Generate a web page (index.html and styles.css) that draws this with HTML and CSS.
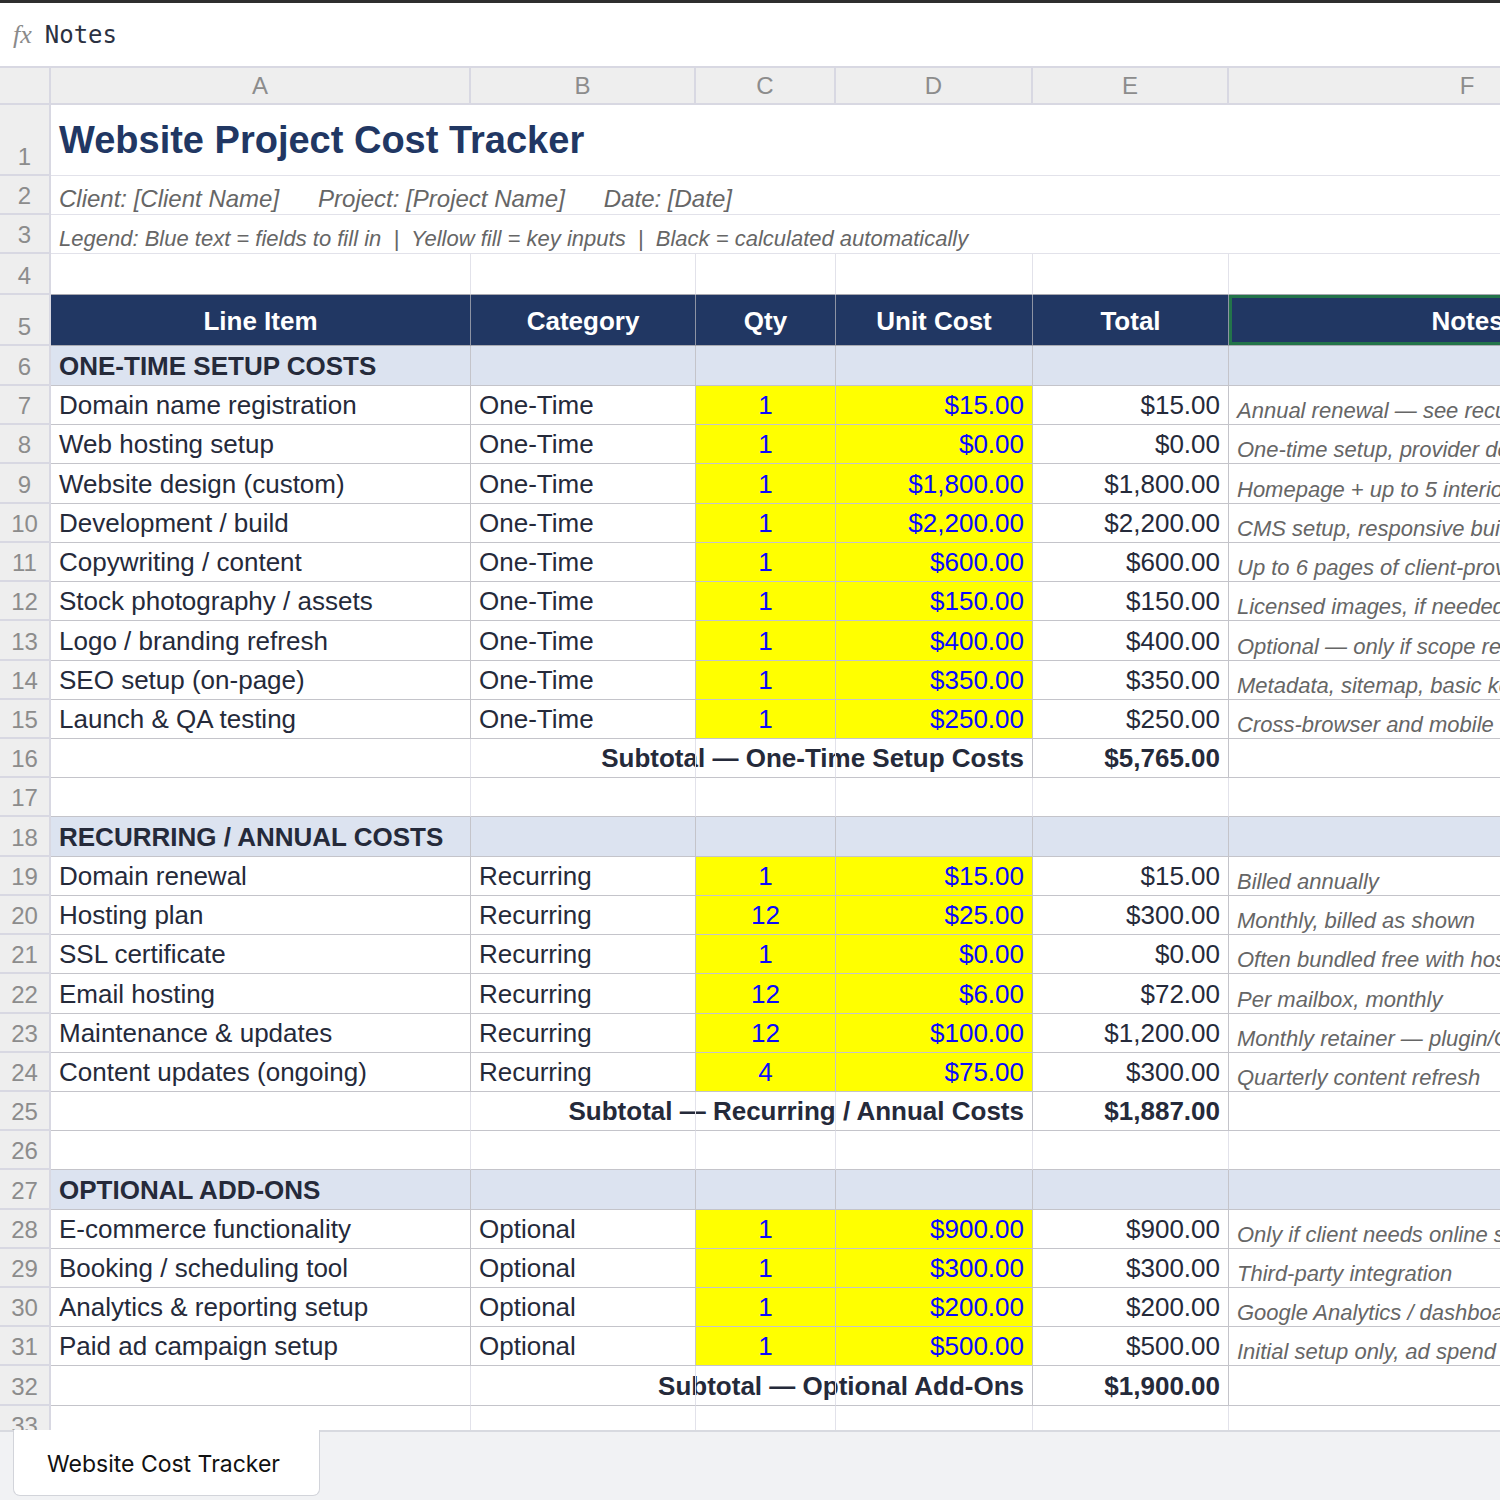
FILE: index.html
```html
<!DOCTYPE html>
<html>
<head>
    <title>Website Cost Tracker</title>
    <meta charset="UTF-8">
    <link rel="stylesheet" href="styles.css">
</head>
<body>
    <div class="app">
        <div class="top-strip"></div>
        <div class="formula-bar">
            <span class="fx">fx</span>
            <span class="formula">Notes</span>
        </div>

        <div class="grid-wrap">
            <table class="sheet">
                <colgroup>
                    <col class="c-rn">
                    <col class="c-a">
                    <col class="c-b">
                    <col class="c-c">
                    <col class="c-d">
                    <col class="c-e">
                    <col class="c-f">
                </colgroup>
                <thead>
                    <tr class="col-heads">
                        <th class="corner"></th>
                        <th>A</th>
                        <th>B</th>
                        <th>C</th>
                        <th>D</th>
                        <th>E</th>
                        <th>F</th>
                    </tr>
                </thead>
                <tbody>
                    <tr class="r-title">
                        <th class="rn">1</th>
                        <td colspan="6" class="title">Website Project Cost Tracker</td>
                    </tr>
                    <tr class="r-info">
                        <th class="rn">2</th>
                        <td colspan="6" class="meta"><span>Client: [Client Name]</span><span>Project: [Project Name]</span><span>Date: [Date]</span></td>
                    </tr>
                    <tr class="r-info">
                        <th class="rn">3</th>
                        <td colspan="6" class="legend">Legend: Blue text = fields to fill in  |  Yellow fill = key inputs  |  Black = calculated automatically</td>
                    </tr>
                    <tr class="r-gap blank">
                        <th class="rn">4</th>
                        <td></td><td></td><td></td><td></td><td></td><td></td>
                    </tr>
                    <tr class="r-head">
                        <th class="rn">5</th>
                        <td class="hd">Line Item</td>
                        <td class="hd">Category</td>
                        <td class="hd">Qty</td>
                        <td class="hd">Unit Cost</td>
                        <td class="hd">Total</td>
                        <td class="hd selected">Notes</td>
                    </tr>

                    <tr class="r-section">
                        <th class="rn">6</th>
                        <td>ONE-TIME SETUP COSTS</td><td></td><td></td><td></td><td></td><td></td>
                    </tr>
                    <tr class="r-item">
                        <th class="rn">7</th>
                        <td>Domain name registration</td><td>One-Time</td>
                        <td class="input qty">1</td><td class="input money">$15.00</td>
                        <td class="money">$15.00</td><td class="note">Annual renewal — see recurring costs</td>
                    </tr>
                    <tr class="r-item">
                        <th class="rn">8</th>
                        <td>Web hosting setup</td><td>One-Time</td>
                        <td class="input qty">1</td><td class="input money">$0.00</td>
                        <td class="money">$0.00</td><td class="note">One-time setup, provider dependent</td>
                    </tr>
                    <tr class="r-item">
                        <th class="rn">9</th>
                        <td>Website design (custom)</td><td>One-Time</td>
                        <td class="input qty">1</td><td class="input money">$1,800.00</td>
                        <td class="money">$1,800.00</td><td class="note">Homepage + up to 5 interior pages</td>
                    </tr>
                    <tr class="r-item">
                        <th class="rn">10</th>
                        <td>Development / build</td><td>One-Time</td>
                        <td class="input qty">1</td><td class="input money">$2,200.00</td>
                        <td class="money">$2,200.00</td><td class="note">CMS setup, responsive build</td>
                    </tr>
                    <tr class="r-item">
                        <th class="rn">11</th>
                        <td>Copywriting / content</td><td>One-Time</td>
                        <td class="input qty">1</td><td class="input money">$600.00</td>
                        <td class="money">$600.00</td><td class="note">Up to 6 pages of client-provided copy</td>
                    </tr>
                    <tr class="r-item">
                        <th class="rn">12</th>
                        <td>Stock photography / assets</td><td>One-Time</td>
                        <td class="input qty">1</td><td class="input money">$150.00</td>
                        <td class="money">$150.00</td><td class="note">Licensed images, if needed</td>
                    </tr>
                    <tr class="r-item">
                        <th class="rn">13</th>
                        <td>Logo / branding refresh</td><td>One-Time</td>
                        <td class="input qty">1</td><td class="input money">$400.00</td>
                        <td class="money">$400.00</td><td class="note">Optional — only if scope requires</td>
                    </tr>
                    <tr class="r-item">
                        <th class="rn">14</th>
                        <td>SEO setup (on-page)</td><td>One-Time</td>
                        <td class="input qty">1</td><td class="input money">$350.00</td>
                        <td class="money">$350.00</td><td class="note">Metadata, sitemap, basic keywords</td>
                    </tr>
                    <tr class="r-item">
                        <th class="rn">15</th>
                        <td>Launch &amp; QA testing</td><td>One-Time</td>
                        <td class="input qty">1</td><td class="input money">$250.00</td>
                        <td class="money">$250.00</td><td class="note">Cross-browser and mobile testing</td>
                    </tr>
                    <tr class="r-item subtotal">
                        <th class="rn">16</th>
                        <td class="open"></td><td class="open"></td><td class="open"></td>
                        <td class="spill-cell"><div class="spill"><span>Subtotal — One-Time Setup Costs</span></div></td>
                        <td class="money">$5,765.00</td><td></td>
                    </tr>
                    <tr class="r-item blank">
                        <th class="rn">17</th>
                        <td></td><td></td><td></td><td></td><td></td><td></td>
                    </tr>

                    <tr class="r-item r-section">
                        <th class="rn">18</th>
                        <td>RECURRING / ANNUAL COSTS</td><td></td><td></td><td></td><td></td><td></td>
                    </tr>
                    <tr class="r-item">
                        <th class="rn">19</th>
                        <td>Domain renewal</td><td>Recurring</td>
                        <td class="input qty">1</td><td class="input money">$15.00</td>
                        <td class="money">$15.00</td><td class="note">Billed annually</td>
                    </tr>
                    <tr class="r-item">
                        <th class="rn">20</th>
                        <td>Hosting plan</td><td>Recurring</td>
                        <td class="input qty">12</td><td class="input money">$25.00</td>
                        <td class="money">$300.00</td><td class="note">Monthly, billed as shown</td>
                    </tr>
                    <tr class="r-item">
                        <th class="rn">21</th>
                        <td>SSL certificate</td><td>Recurring</td>
                        <td class="input qty">1</td><td class="input money">$0.00</td>
                        <td class="money">$0.00</td><td class="note">Often bundled free with hosting</td>
                    </tr>
                    <tr class="r-item">
                        <th class="rn">22</th>
                        <td>Email hosting</td><td>Recurring</td>
                        <td class="input qty">12</td><td class="input money">$6.00</td>
                        <td class="money">$72.00</td><td class="note">Per mailbox, monthly</td>
                    </tr>
                    <tr class="r-item">
                        <th class="rn">23</th>
                        <td>Maintenance &amp; updates</td><td>Recurring</td>
                        <td class="input qty">12</td><td class="input money">$100.00</td>
                        <td class="money">$1,200.00</td><td class="note">Monthly retainer — plugin/CMS updates</td>
                    </tr>
                    <tr class="r-item">
                        <th class="rn">24</th>
                        <td>Content updates (ongoing)</td><td>Recurring</td>
                        <td class="input qty">4</td><td class="input money">$75.00</td>
                        <td class="money">$300.00</td><td class="note">Quarterly content refresh</td>
                    </tr>
                    <tr class="r-item subtotal">
                        <th class="rn">25</th>
                        <td class="open"></td><td class="open"></td><td class="open"></td>
                        <td class="spill-cell"><div class="spill"><span>Subtotal — Recurring / Annual Costs</span></div></td>
                        <td class="money">$1,887.00</td><td></td>
                    </tr>
                    <tr class="r-item blank">
                        <th class="rn">26</th>
                        <td></td><td></td><td></td><td></td><td></td><td></td>
                    </tr>

                    <tr class="r-item r-section">
                        <th class="rn">27</th>
                        <td>OPTIONAL ADD-ONS</td><td></td><td></td><td></td><td></td><td></td>
                    </tr>
                    <tr class="r-item">
                        <th class="rn">28</th>
                        <td>E-commerce functionality</td><td>Optional</td>
                        <td class="input qty">1</td><td class="input money">$900.00</td>
                        <td class="money">$900.00</td><td class="note">Only if client needs online sales</td>
                    </tr>
                    <tr class="r-item">
                        <th class="rn">29</th>
                        <td>Booking / scheduling tool</td><td>Optional</td>
                        <td class="input qty">1</td><td class="input money">$300.00</td>
                        <td class="money">$300.00</td><td class="note">Third-party integration</td>
                    </tr>
                    <tr class="r-item">
                        <th class="rn">30</th>
                        <td>Analytics &amp; reporting setup</td><td>Optional</td>
                        <td class="input qty">1</td><td class="input money">$200.00</td>
                        <td class="money">$200.00</td><td class="note">Google Analytics / dashboard setup</td>
                    </tr>
                    <tr class="r-item">
                        <th class="rn">31</th>
                        <td>Paid ad campaign setup</td><td>Optional</td>
                        <td class="input qty">1</td><td class="input money">$500.00</td>
                        <td class="money">$500.00</td><td class="note">Initial setup only, ad spend not included</td>
                    </tr>
                    <tr class="r-item subtotal">
                        <th class="rn">32</th>
                        <td class="open"></td><td class="open"></td><td class="open"></td>
                        <td class="spill-cell"><div class="spill"><span>Subtotal — Optional Add-Ons</span></div></td>
                        <td class="money">$1,900.00</td><td></td>
                    </tr>
                    <tr class="r-item blank">
                        <th class="rn">33</th>
                        <td></td><td></td><td></td><td></td><td></td><td></td>
                    </tr>
                    <tr class="r-item blank">
                        <th class="rn">34</th>
                        <td></td><td></td><td></td><td></td><td></td><td></td>
                    </tr>
                </tbody>
            </table>
        </div>

        <div class="tab-bar">
            <div class="tab">Website Cost Tracker</div>
        </div>
    </div>
</body>
</html>
```

FILE: styles.css
```css
:root {
    --navy: #213763;
    --section: #dce3f0;
    --input-fill: #ffff00;
    --input-text: #0a0aff;
    --text: #252a3a;
    --muted: #666;
    --head-bg: #eeeeee;
    --head-line: #d8d8e2;
    --grid: #c4c4ca;
    --grid-light: #e2e2ea;
}

* {
    margin: 0;
    padding: 0;
    box-sizing: border-box;
}

body {
    width: 1500px;
    height: 1500px;
    overflow: hidden;
    background: #fff;
    color: var(--text);
    font-family: "Liberation Sans", Arial, sans-serif;
}

.app {
    display: flex;
    flex-direction: column;
    height: 1500px;
}

.top-strip {
    height: 3px;
    background: #2f2f2f;
}

/* formula bar */
.formula-bar {
    height: 63px;
    display: flex;
    align-items: center;
    gap: 13px;
    padding-left: 13px;
}

.fx {
    font-family: "Liberation Serif", serif;
    font-style: italic;
    font-size: 26px;
    color: #8a8a8a;
}

.formula {
    font-family: "DejaVu Sans Mono", monospace;
    font-size: 24px;
    color: #2b3142;
}

/* grid */
.grid-wrap {
    flex: 1;
    overflow: hidden;
    border-top: 2px solid var(--head-line);
}

.sheet {
    position: relative;
    z-index: 0;
    width: 1707px;
    table-layout: fixed;
    border-collapse: separate;
    border-spacing: 0;
    background: #fff;
}

.c-rn { width: 51px; }
.c-a { width: 420px; }
.c-b { width: 225px; }
.c-c { width: 140px; }
.c-d { width: 197px; }
.c-e { width: 196px; }
.c-f { width: 478px; }

.col-heads {
    height: 37px;
}

.col-heads th {
    background: var(--head-bg);
    color: #8c8c8c;
    font-size: 24px;
    font-weight: normal;
    text-align: center;
    vertical-align: middle;
    border-right: 2px solid var(--head-line);
    border-bottom: 2px solid var(--head-line);
}

.rn {
    background: var(--head-bg);
    color: #8c8c8c;
    font-size: 24px;
    font-weight: normal;
    text-align: center;
    vertical-align: bottom;
    padding-bottom: 3px;
    border-right: 2px solid var(--head-line);
    border-bottom: 2px solid var(--head-line);
}

td {
    font-size: 26px;
    padding: 0 8px 3px;
    vertical-align: bottom;
    white-space: nowrap;
    border-right: 1px solid var(--grid);
    border-bottom: 1px solid var(--grid);
}

/* title block */
.r-title { height: 71px; }
.r-info { height: 39px; }

.r-title td,
.r-info td {
    border-right: none;
    border-bottom: 1px solid var(--grid-light);
}

.title {
    font-size: 38px;
    font-weight: bold;
    color: var(--navy);
    padding-bottom: 13px;
}

.meta {
    font-size: 24px;
    font-style: italic;
    color: var(--muted);
    padding-bottom: 1px;
}

.meta span + span {
    margin-left: 39px;
}

.legend {
    font-size: 22px;
    font-style: italic;
    color: var(--muted);
    white-space: pre;
    padding-bottom: 1px;
}

.r-gap { height: 41px; }

.blank td {
    border-right-color: var(--grid-light);
}

.r-gap td {
    border-bottom-color: #a8a8b0;
}

/* table header */
.r-head { height: 51px; }

.hd {
    background: var(--navy);
    color: #fff;
    font-weight: bold;
    text-align: center;
    vertical-align: middle;
    padding: 2px 8px 0;
    border-right-color: #8d93a3;
    border-bottom-color: #a9abb3;
}

.selected {
    box-shadow: inset 0 0 0 3px #23744a;
}

.r-section { height: 40px; }
.r-item { height: 39.22px; }
.r-item.r-section { height: 39.22px; }

.r-section td {
    background: var(--section);
    font-weight: bold;
}

.input {
    background: var(--input-fill);
    color: var(--input-text);
}

.qty { text-align: center; }
.money { text-align: right; }

.note {
    font-size: 22px;
    font-style: italic;
    color: var(--muted);
    overflow: hidden;
    padding-bottom: 0;
}

/* subtotal rows: label runs left across the empty cells */
.subtotal td {
    font-weight: bold;
    background: transparent;
}

.subtotal .open {
    border-right-color: var(--grid-light);
}

.subtotal .open:first-child {
    border-right-color: #d6d6dc;
}

.spill {
    display: flex;
    justify-content: flex-end;
}

.spill span {
    position: relative;
    z-index: -1;
    white-space: nowrap;
}

/* sheet tabs */
.tab-bar {
    height: 70px;
    flex-shrink: 0;
    background: #f1f2f4;
    border-top: 2px solid #d8dae0;
    padding-left: 13px;
}

.tab {
    width: 307px;
    height: 66px;
    margin-top: -2px;
    padding-left: 33px;
    padding-top: 2px;
    display: flex;
    align-items: center;
    background: #fff;
    border: 1px solid #d2d4da;
    border-top: none;
    border-radius: 0 0 7px 7px;
    font-family: Inter, "Liberation Sans", sans-serif;
    font-size: 23px;
    color: #111;
}
```
